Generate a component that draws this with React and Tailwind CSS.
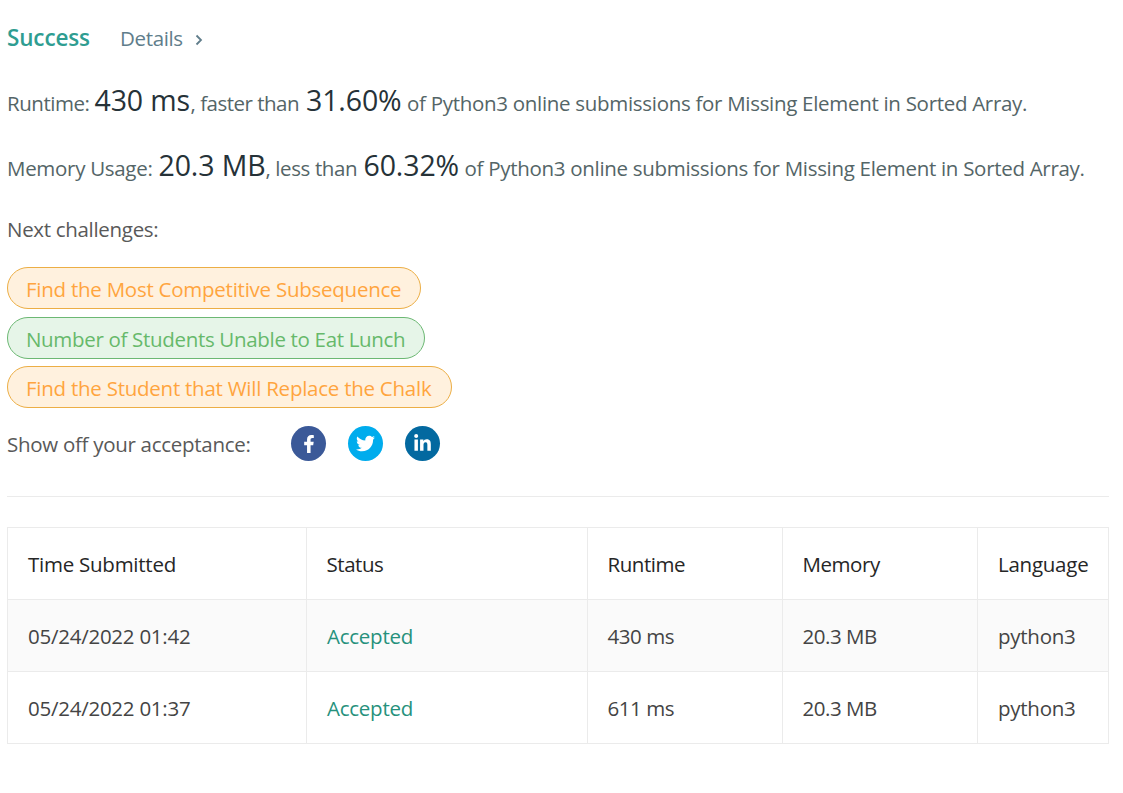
import { FaFacebookF, FaTwitter, FaLinkedinIn } from "react-icons/fa";

const challenges = [
  { title: "Find the Most Competitive Subsequence", style: "mb-2 w-[414px] border-[#ecae45] bg-[#fff1de] text-[#ffa53e]" },
  { title: "Number of Students Unable to Eat Lunch", style: "mb-[7px] w-[418px] border-[#6cb873] bg-[#e6f5e8] text-[#66b96b] tracking-[-0.32px]" },
  { title: "Find the Student that Will Replace the Chalk", style: "w-[445px] border-[#ecae45] bg-[#fff1de] text-[#ffa53e]" },
];

const submissions = [
  { time: "05/24/2022 01:42", runtime: "430 ms", row: "bg-[#fafafa]" },
  { time: "05/24/2022 01:37", runtime: "611 ms", row: "bg-white" },
];

const columns = "grid grid-cols-[299px_281px_195px_195px_131px] h-[72px] border-b border-[#ebebeb]";
const cell = "flex items-center border-r border-[#ebebeb] pl-5";
const tight = "flex items-center border-r border-[#ebebeb] pl-[19.5px] tracking-[-0.45px]";
const figure = "text-[28.5px] tracking-[-0.12px] text-[#263238]";

export default function App() {
  return (
    <main className="h-[793px] w-[1123px] overflow-hidden whitespace-nowrap bg-white pl-[7px] pr-[14px] font-['Open_Sans',sans-serif] text-[20.5px] leading-[30px] tracking-[-0.25px] text-[#595959]">
      <header className="flex h-[81px] items-start pt-[23px]">
        <h1 className="w-[113px] text-[22.5px] tracking-[-0.15px] font-semibold text-[#2f9d91]">Success</h1>
        <a className="flex items-center text-[#607d8b]">
          <span className="w-[73px] tracking-[-0.35px]">Details</span>
          <svg className="mt-1 h-3 w-3" viewBox="0 0 12 12" fill="none" stroke="currentColor" strokeWidth="1.8"><path d="M3.500 1.500 8 6l-4.500 4.500" /></svg>
        </a>
      </header>
      <p className="flex h-[65px] items-baseline whitespace-pre pt-1 text-[#546567]">
        <span className="w-[87.5px] tracking-[-0.45px]">Runtime: </span>
        <span className={`w-[96px] ${figure}`}>430 ms</span>
        <span className="w-[115.5px] tracking-[-0.5px]">, faster than </span>
        <span className={`w-[96px] ${figure}`}>31.60%</span>
        <span className="tracking-[-0.3px]"> of Python3 online submissions for Missing Element in Sorted Array.</span>
      </p>
      <p className="flex h-[65px] items-baseline whitespace-pre pt-1 text-[#546567]">
        <span className="w-[151.5px] tracking-[-0.3px]">Memory Usage: </span>
        <span className={`w-[107px] ${figure}`}>20.3 MB</span>
        <span className="w-[98px] tracking-[-0.4px]">, less than </span>
        <span className={`w-[96px] ${figure}`}>60.32%</span>
        <span className="tracking-[-0.3px]"> of Python3 online submissions for Missing Element in Sorted Array.</span>
      </p>
      <p className="h-[56px] pt-[3px] tracking-[-0.31px]">Next challenges:</p>
      <div className="flex flex-col">
        {challenges.map((c) => (
          <a key={c.title} className={`flex h-[42px] items-center rounded-full border pl-[18px] pt-0.5 ${c.style}`}>{c.title}</a>
        ))}
      </div>
      <div className="mt-[17px] flex h-9 items-center">
        <span className="w-[284px] pt-px tracking-[-0.29px]">Show off your acceptance:</span>
        <div className="flex gap-[22px] pl-[0.4px] pt-px text-white">
          <span className="flex size-[35px] items-center justify-center rounded-full bg-[#3b5998]"><FaFacebookF size={18} /></span>
          <span className="flex size-[35px] items-center justify-center rounded-full bg-[#00aced]"><FaTwitter size={19} /></span>
          <span className="flex size-[35px] items-center justify-center rounded-full bg-[#0369a0]"><FaLinkedinIn size={19} /></span>
        </div>
      </div>
      <hr className="mt-[35px] border-[#ebebeb]" />
      <section className="mt-[30px] w-[1102px] border-l border-t border-[#ebebeb]">
        <div className={`${columns} text-[#262626]`}>
          <span className={cell}>Time Submitted</span>
          <span className={tight}>Status</span>
          <span className={tight}>Runtime</span>
          <span className={tight}>Memory</span>
          <span className={cell}>Language</span>
        </div>
        {submissions.map((s) => (
          <div key={s.time} className={`${columns} ${s.row} text-[#444444]`}>
            <span className={cell}>{s.time}</span>
            <span className={`${cell} text-[#26917c]`}>Accepted</span>
            <span className={tight}>{s.runtime}</span>
            <span className={tight}>20.3 MB</span>
            <span className={cell}>python3</span>
          </div>
        ))}
      </section>
    </main>
  );
}
